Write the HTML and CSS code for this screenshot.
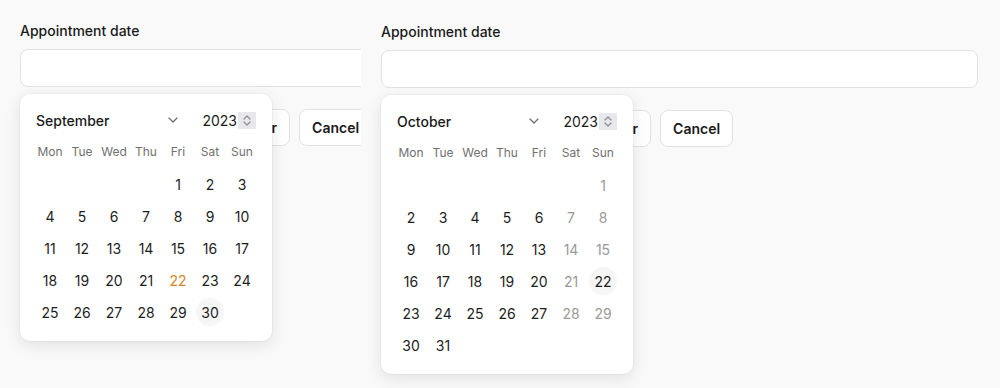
FILE: index.html
```html
<!DOCTYPE html>
<html lang="en">
<head>
<meta charset="utf-8">
<title>Appointment date</title>
<link rel="stylesheet" href="styles.css">
</head>
<body>
<div class="page">
  <section class="pane">
    <div class="form">
      <div class="label">Appointment date</div>
      <div class="field">
        <div class="input"></div>
        <div class="popover">
          <div class="cal-head">
            <div class="month-select">
              <span>September</span>
              <svg class="chev" width="10" height="6" viewBox="0 0 10 6"><path d="M1 1 L5 5 L9 1" fill="none" stroke="#6f6f6f" stroke-width="1.3" stroke-linecap="round" stroke-linejoin="round"/></svg>
            </div>
            <div class="year">
              <span>2023</span>
              <span class="spin"><svg width="18" height="17" viewBox="0 0 18 17"><path d="M6 7 L9 4 L12 7" fill="none" stroke="#8d8d8d" stroke-width="1.2" stroke-linecap="round" stroke-linejoin="round"/><path d="M6 10 L9 13 L12 10" fill="none" stroke="#8d8d8d" stroke-width="1.2" stroke-linecap="round" stroke-linejoin="round"/></svg></span>
            </div>
          </div>
          <div class="weekdays">
            <span>Mon</span><span>Tue</span><span>Wed</span><span>Thu</span><span>Fri</span><span>Sat</span><span>Sun</span>
          </div>
          <div class="days">
            <span class="day start-fri">1</span><span class="day">2</span><span class="day">3</span>
            <span class="day">4</span><span class="day">5</span><span class="day">6</span><span class="day">7</span><span class="day">8</span><span class="day">9</span><span class="day">10</span>
            <span class="day">11</span><span class="day">12</span><span class="day">13</span><span class="day">14</span><span class="day">15</span><span class="day">16</span><span class="day">17</span>
            <span class="day">18</span><span class="day">19</span><span class="day">20</span><span class="day">21</span><span class="day today">22</span><span class="day">23</span><span class="day">24</span>
            <span class="day">25</span><span class="day">26</span><span class="day">27</span><span class="day">28</span><span class="day">29</span><span class="day sel">30</span>
          </div>
        </div>
      </div>
      <div class="actions">
        <button class="btn">Save appointment</button>
        <button class="btn">Set reminder</button>
        <button class="btn">Cancel</button>
      </div>
    </div>
  </section>

  <section class="pane pane-shift">
    <div class="form">
      <div class="label">Appointment date</div>
      <div class="field">
        <div class="input"></div>
        <div class="popover">
          <div class="cal-head">
            <div class="month-select">
              <span>October</span>
              <svg class="chev" width="10" height="6" viewBox="0 0 10 6"><path d="M1 1 L5 5 L9 1" fill="none" stroke="#6f6f6f" stroke-width="1.3" stroke-linecap="round" stroke-linejoin="round"/></svg>
            </div>
            <div class="year">
              <span>2023</span>
              <span class="spin"><svg width="18" height="17" viewBox="0 0 18 17"><path d="M6 7 L9 4 L12 7" fill="none" stroke="#8d8d8d" stroke-width="1.2" stroke-linecap="round" stroke-linejoin="round"/><path d="M6 10 L9 13 L12 10" fill="none" stroke="#8d8d8d" stroke-width="1.2" stroke-linecap="round" stroke-linejoin="round"/></svg></span>
            </div>
          </div>
          <div class="weekdays">
            <span>Mon</span><span>Tue</span><span>Wed</span><span>Thu</span><span>Fri</span><span>Sat</span><span>Sun</span>
          </div>
          <div class="days">
            <span class="day start-sun off">1</span>
            <span class="day">2</span><span class="day">3</span><span class="day">4</span><span class="day">5</span><span class="day">6</span><span class="day off">7</span><span class="day off">8</span>
            <span class="day">9</span><span class="day">10</span><span class="day">11</span><span class="day">12</span><span class="day">13</span><span class="day off">14</span><span class="day off">15</span>
            <span class="day">16</span><span class="day">17</span><span class="day">18</span><span class="day">19</span><span class="day">20</span><span class="day off">21</span><span class="day sel">22</span>
            <span class="day">23</span><span class="day">24</span><span class="day">25</span><span class="day">26</span><span class="day">27</span><span class="day off">28</span><span class="day off">29</span>
            <span class="day">30</span><span class="day">31</span>
          </div>
        </div>
      </div>
      <div class="actions">
        <button class="btn">Save appointment</button>
        <button class="btn">Set reminder</button>
        <button class="btn">Cancel</button>
      </div>
    </div>
  </section>
</div>
</body>
</html>
```

FILE: styles.css
```css
* {
  box-sizing: border-box;
}

body {
  margin: 0;
  background: #f9f9f9;
  font-family: Inter, "Noto Sans", "Liberation Sans", sans-serif;
  color: #1d1d1d;
}

.page {
  display: grid;
  grid-template-columns: 361px 639px;
  height: 388px;
}

.pane {
  padding: 21px 0 0 20px;
  overflow: hidden;
}

.pane-shift {
  padding-top: 22px;
}

.form {
  width: 597px;
}

.label {
  font-size: 14px;
  line-height: 20px;
  font-weight: 500;
  color: #1a1a1a;
  margin-bottom: 8px;
}

.field {
  position: relative;
}

.input {
  height: 38px;
  background: #fff;
  border: 1px solid #e2e2e2;
  border-radius: 8px;
}

.actions {
  display: flex;
  gap: 9px;
  margin-top: 22px;
}

.btn {
  height: 37px;
  padding: 0 12px;
  border: 1px solid #e2e2e2;
  border-radius: 8px;
  background: #fff;
  font-family: Inter, "Noto Sans", sans-serif;
  font-size: 14px;
  font-weight: 600;
  color: #1a1a1a;
  display: flex;
  align-items: center;
}

.popover {
  position: absolute;
  top: calc(100% + 7px);
  left: 0;
  z-index: 2;
  width: 252px;
  padding: 14px 14px 13px;
  background: #fff;
  border-radius: 10px;
  box-shadow: 0 4px 16px rgba(0, 0, 0, 0.1), 0 0 0 1px rgba(0, 0, 0, 0.025);
}

.cal-head {
  display: flex;
  align-items: center;
  height: 24px;
  margin-bottom: 6px;
}

.month-select {
  width: 150px;
  display: flex;
  align-items: center;
  justify-content: space-between;
  padding: 0 6px 0 2px;
  font-size: 14px;
  font-weight: 500;
  color: #1a1a1a;
}

.chev {
  display: block;
}

.year {
  margin-left: auto;
  margin-right: 2px;
  display: flex;
  align-items: center;
  font-size: 14px;
  color: #1a1a1a;
}

.spin {
  display: block;
  width: 18px;
  height: 17px;
  margin-left: 1px;
  background: #e8e8ec;
}

.spin svg {
  display: block;
}

.weekdays {
  display: grid;
  grid-template-columns: repeat(7, 32px);
  height: 26px;
  align-items: center;
  justify-items: center;
  font-size: 12px;
  color: #707070;
}

.days {
  display: grid;
  grid-template-columns: repeat(7, 32px);
  grid-auto-rows: 32px;
  margin-top: 4px;
  place-items: center;
  font-size: 14px;
}

.day {
  width: 28px;
  height: 28px;
  display: grid;
  place-items: center;
  border-radius: 50%;
  color: #1d1d1d;
}

.start-fri {
  grid-column-start: 5;
}

.start-sun {
  grid-column-start: 7;
}

.today {
  color: #d8861f;
}

.off {
  color: #9a9a9a;
}

.sel {
  background: #f6f6f6;
}
```
